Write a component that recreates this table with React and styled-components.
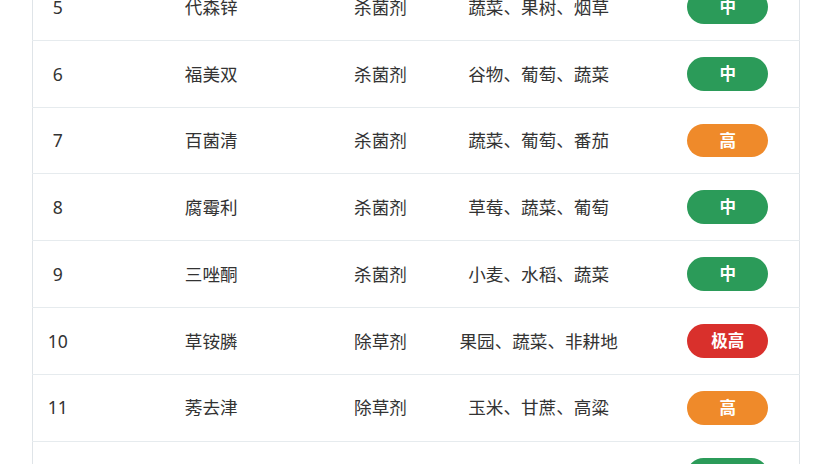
import React from "react"
import styled, { createGlobalStyle } from "styled-components"

const GlobalStyle = createGlobalStyle`
  html, body {
    margin: 0;
    padding: 0;
    background: #fff;
    overflow: hidden;
  }

  body {
    font-family: "Noto Sans", "Noto Sans CJK SC", sans-serif;
    color: #333;
  }
`

const Page = styled.div`
  height: 464px;
  overflow: hidden;
  padding: 0 30px 0 32px;
`

const Table = styled.table`
  width: 768px;
  margin-top: -26px;
  border-collapse: collapse;
  table-layout: fixed;
  border-left: 1px solid #dfe4e8;
  border-right: 1px solid #dfe4e8;
  font-size: 17.6px;
`

const Col = styled.col`
  width: ${(p) => p.$width}px;
`

const Row = styled.tr`
  border-bottom: 1px solid #e6ebee;
`

const Cell = styled.td`
  padding: 16px 6px;
  text-align: center;
  vertical-align: middle;
  white-space: nowrap;
  line-height: 1.5;
`

const levelColors = {
  中: "#2b9b59",
  高: "#ef8a2a",
  极高: "#d9302c",
}

const Badge = styled.span`
  display: inline-block;
  width: 81px;
  height: 33.8px;
  line-height: 33.8px;
  border-radius: 17px;
  background: ${(p) => p.$color};
  color: #fff;
  font-weight: 700;
  font-size: 16.5px;
  text-align: center;
  vertical-align: middle;
`

const columns = [50, 257, 81, 235, 143]

const rows = [
  { id: 5, name: "代森锌", type: "杀菌剂", crops: "蔬菜、果树、烟草", level: "中" },
  { id: 6, name: "福美双", type: "杀菌剂", crops: "谷物、葡萄、蔬菜", level: "中" },
  { id: 7, name: "百菌清", type: "杀菌剂", crops: "蔬菜、葡萄、番茄", level: "高" },
  { id: 8, name: "腐霉利", type: "杀菌剂", crops: "草莓、蔬菜、葡萄", level: "中" },
  { id: 9, name: "三唑酮", type: "杀菌剂", crops: "小麦、水稻、蔬菜", level: "中" },
  { id: 10, name: "草铵膦", type: "除草剂", crops: "果园、蔬菜、非耕地", level: "极高" },
  { id: 11, name: "莠去津", type: "除草剂", crops: "玉米、甘蔗、高粱", level: "高" },
  { id: 12, name: "乙草胺", type: "除草剂", crops: "玉米、大豆、花生", level: "中" },
]

export default function App() {
  return (
    <Page>
      <GlobalStyle />
      <Table>
        <colgroup>
          {columns.map((w, i) => (
            <Col key={i} $width={w} />
          ))}
        </colgroup>
        <tbody>
          {rows.map((r) => (
            <Row key={r.id}>
              <Cell>{r.id}</Cell>
              <Cell>{r.name}</Cell>
              <Cell>{r.type}</Cell>
              <Cell>{r.crops}</Cell>
              <Cell>
                <Badge $color={levelColors[r.level]}>{r.level}</Badge>
              </Cell>
            </Row>
          ))}
        </tbody>
      </Table>
    </Page>
  )
}
